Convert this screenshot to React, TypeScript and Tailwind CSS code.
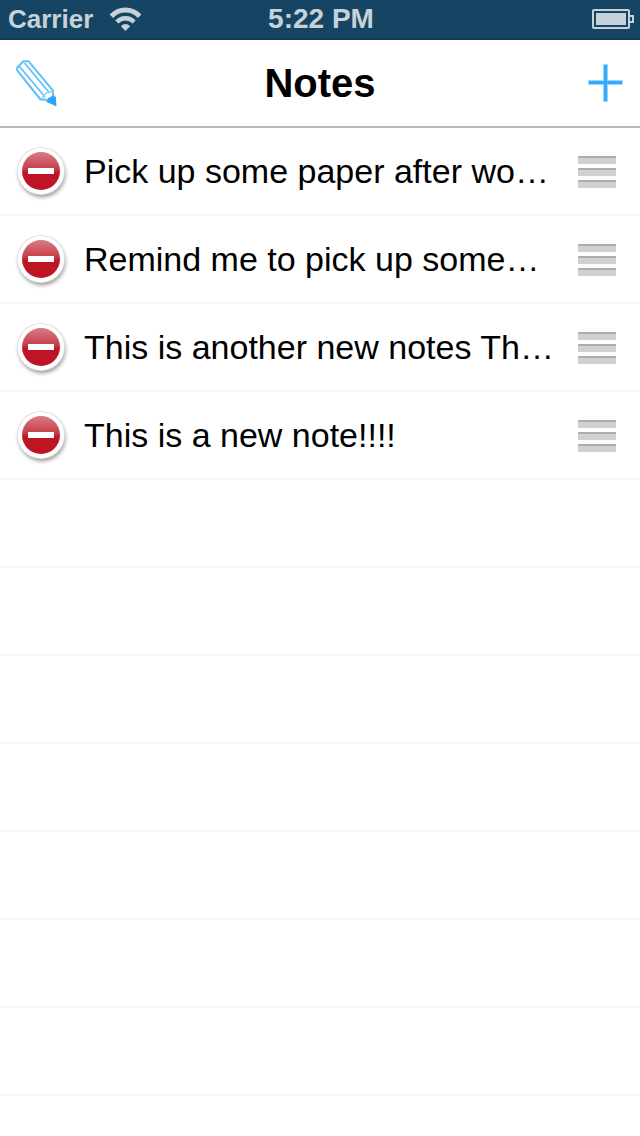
import React, { useState } from 'react'

const initialNotes = [
  { id: 1, text: 'Pick up some paper after wo…' },
  { id: 2, text: 'Remind me to pick up some…' },
  { id: 3, text: 'This is another new notes Th…' },
  { id: 4, text: 'This is a new note!!!!' }
]

const ROWS_ON_SCREEN = 11

const WifiIcon: React.FC = () => (
  <svg viewBox="-1 0 32 24" className="w-8 h-6" fill="none" stroke="#c6d2da" aria-hidden="true">
    <path d="M1.4 9.2 C9 0.9 22 0.9 29.6 9.2" strokeWidth="5" />
    <path d="M6.9 15 C11.7 10 19.3 10 24.1 15" strokeWidth="4.4" />
    <path d="M15.5 24 L11.1 19.4 C13.1 16.2 17.9 16.2 19.9 19.4 Z" fill="#c6d2da" stroke="none" />
  </svg>
)

const BatteryIcon: React.FC = () => (
  <svg viewBox="0 0 42 20" className="w-[42px] h-5" fill="#c6d2da" aria-hidden="true">
    <rect x="1" y="1" width="36" height="18" rx="1" fill="none" stroke="#c6d2da" strokeWidth="2" />
    <rect x="4" y="4" width="30" height="12" />
    <path d="M38 6h4v8h-4v-2h2v-4h-2z" />
  </svg>
)

const PencilIcon: React.FC = () => (
  <svg viewBox="0 0 42 48" className="w-[42px] h-12" fill="none" stroke="#62bffa" strokeWidth="2" aria-hidden="true">
    <path d="M24.5 40.5 L1.2 11.5 V8.5 L7.5 2.2 H12.5 L37 31.5 V36 L39 38.5 V46 L32 42.5 L29 40.5 Z" />
    <path d="M3.5 7.5 L29 38 M8.5 4 L33.5 34" strokeWidth="1.7" />
    <path d="M26 39.5 L28 36 L32.5 32.5 L37 33" stroke="#8fd1fb" strokeWidth="1.5" />
    <path d="M31.5 39.5 L37 36.5 L39.8 38.5 L40.5 47 L31 43 Z" fill="#2fa4f8" stroke="none" />
  </svg>
)

const PlusIcon: React.FC = () => (
  <svg viewBox="1 0 36 38" className="w-9 h-[38px]" aria-hidden="true">
    <path d="M16 0h5v16h15v5H21v17h-5V21H1v-5h15z" fill="#a0d7ff" />
    <path d="M17 1h3v16h15v3H20v17h-3V20H2v-3h15z" fill="#33a9ff" />
  </svg>
)

const GripIcon: React.FC = () => (
  <svg viewBox="0 -2 38 34" className="w-[38px] h-[34px]" aria-hidden="true">
    <path d="M0 0h38v8H0z M0 12h38v8H0z M0 24h38v8H0z" fill="#d1d1d1" />
    <path d="M0 0h38v2H0z M0 12h38v2H0z M0 24h38v2H0z" fill="#adadad" />
  </svg>
)

const App: React.FC = () => {
  const [notes, setNotes] = useState(initialNotes)
  const emptyRows = Math.max(0, ROWS_ON_SCREEN - notes.length)

  const removeNote = (id: number) => {
    setNotes(notes.filter((note) => note.id !== id))
  }

  return (
    <div className="min-h-screen bg-white font-['Liberation_Sans',Arial,sans-serif] text-black">
      <div className="grid grid-cols-[1fr_auto_1fr] items-center h-10 pl-2 pr-1.5 bg-[#164563] border-b-2 border-[#103950] font-bold text-[#c6d2da]">
        <div className="flex items-center gap-4">
          <span className="text-[26px] leading-8">Carrier</span>
          <WifiIcon />
        </div>
        <span className="text-[28px] leading-8">5:22 PM</span>
        <div className="flex justify-end">
          <BatteryIcon />
        </div>
      </div>

      <header className="grid grid-cols-[1fr_auto_1fr] items-center h-[88px] px-4 border-b-2 border-[#b9b9b9]">
        <button aria-label="Edit notes" className="justify-self-start">
          <PencilIcon />
        </button>
        <h1 className="text-[40px] leading-12 font-bold">Notes</h1>
        <button aria-label="Add note" className="justify-self-end">
          <PlusIcon />
        </button>
      </header>

      <ul>
        {notes.map((note) => (
          <li key={note.id} className="flex items-center h-[88px] pl-[18px] pr-6 border-b-2 border-[#f7f7f7]">
            <button
              aria-label={`Delete ${note.text}`}
              onClick={() => removeNote(note.id)}
              className="flex shrink-0 items-center justify-center w-[46px] h-[46px] rounded-full bg-white shadow-[0_0_0_1px_#e2e2e2,1px_3px_4px_#00000070]"
            >
              <span className="flex items-center justify-center w-[38px] h-[38px] rounded-full bg-linear-to-b from-[#d67c86] from-0% via-[#c63a49] via-45% to-[#be1424] to-55%">
                <span className="w-[26px] h-1.5 bg-white" />
              </span>
            </button>
            <span className="flex-1 min-w-0 ml-5 mr-2 truncate text-[34px] leading-10">{note.text}</span>
            <button aria-label={`Move ${note.text}`} className="shrink-0">
              <GripIcon />
            </button>
          </li>
        ))}
      </ul>

      <div aria-hidden="true">
        {Array.from({ length: emptyRows }, (_, i) => (
          <div key={i} className="h-[88px] border-b-2 border-[#f7f7f7]" />
        ))}
      </div>
    </div>
  )
}

export default App
